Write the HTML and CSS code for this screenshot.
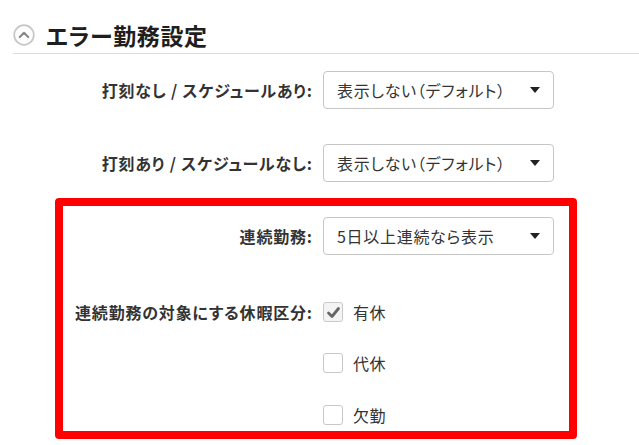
FILE: index.html
```html
<!DOCTYPE html>
<html lang="ja">
<head>
<meta charset="utf-8">
<title>エラー勤務設定</title>
<link rel="stylesheet" href="styles.css">
</head>
<body>
<div class="page">
  <div class="header">
    <span class="toggle">
      <svg width="22" height="22" viewBox="0 0 22 22"><circle cx="11" cy="11" r="9.8" fill="#fff" stroke="#c8c8c8" stroke-width="1.8"/><path d="M6.8 13 L11 8.8 L15.2 13" fill="none" stroke="#8a8a8a" stroke-width="2.2" stroke-linecap="round" stroke-linejoin="round"/></svg>
    </span>
    <h1 class="title">エラー勤務設定</h1>
  </div>
  <div class="form">
    <div class="row r1">
      <div class="label">打刻なし / スケジュールあり:</div>
      <div class="select"><span class="value">表示しない（デフォルト）</span><svg class="caret" width="10" height="6" viewBox="0 0 10 6"><path d="M0 0 H10 L5 6 Z" fill="#222"/></svg></div>
    </div>
    <div class="row r2">
      <div class="label">打刻あり / スケジュールなし:</div>
      <div class="select"><span class="value">表示しない（デフォルト）</span><svg class="caret" width="10" height="6" viewBox="0 0 10 6"><path d="M0 0 H10 L5 6 Z" fill="#222"/></svg></div>
    </div>
    <div class="row r3">
      <div class="label">連続勤務:</div>
      <div class="select"><span class="value">5日以上連続なら表示</span><svg class="caret" width="10" height="6" viewBox="0 0 10 6"><path d="M0 0 H10 L5 6 Z" fill="#222"/></svg></div>
    </div>
    <div class="row r4">
      <div class="label">連続勤務の対象にする休暇区分:</div>
      <label class="check"><span class="box checked"><svg width="15" height="13" viewBox="0 0 15 13"><path d="M2.5 7 L6 10.5 L12.5 2.5" fill="none" stroke="#666" stroke-width="2.8" stroke-linecap="round" stroke-linejoin="round"/></svg></span><span class="ctext">有休</span></label>
    </div>
    <div class="row r5">
      <div class="label"></div>
      <label class="check"><span class="box"></span><span class="ctext">代休</span></label>
    </div>
    <div class="row r6">
      <div class="label"></div>
      <label class="check"><span class="box"></span><span class="ctext">欠勤</span></label>
    </div>
  </div>
  <div class="highlight"></div>
</div>
</body>
</html>
```

FILE: styles.css
```css
* { box-sizing: border-box; }

html, body {
  margin: 0;
  padding: 0;
  background: #fff;
}

body {
  font-family: "Noto Sans CJK JP", "Noto Sans", sans-serif;
  font-feature-settings: "palt";
  color: #333;
  width: 639px;
  height: 445px;
  overflow: hidden;
}

.page {
  position: relative;
  width: 639px;
  height: 445px;
}

.header {
  display: flex;
  align-items: center;
  margin-left: 13px;
  height: 54px;
  padding-top: 17px;
  border-bottom: 1px solid #dcdcdc;
}

.toggle {
  display: flex;
  width: 22px;
  height: 22px;
  margin-right: 11px;
}

.title {
  margin: 0;
  font-size: 23px;
  font-weight: 700;
  color: #1e1e1e;
  line-height: 1;
  letter-spacing: 0.6px;
}

.form {
  display: flex;
  flex-direction: column;
}

.row {
  display: grid;
  grid-template-columns: 312px 231px;
  column-gap: 11px;
  align-items: center;
  height: 38px;
}

.r1 { margin-top: 17px; }
.r2 { margin-top: 35px; }
.r3 { margin-top: 35px; }
.r4 { margin-top: 38px; }
.r5 { margin-top: 13px; }
.r6 { margin-top: 14px; }

.label {
  text-align: right;
  font-size: 16px;
  font-weight: 700;
  color: #333;
  white-space: nowrap;
  letter-spacing: 0.8px;
  margin-right: -0.8px;
}

.select {
  display: flex;
  align-items: center;
  justify-content: space-between;
  height: 38px;
  border: 1px solid #c6c6c6;
  border-radius: 4px;
  padding: 0 13px 0 13px;
  background: #fff;
}

.value {
  font-size: 16px;
  color: #333;
  white-space: nowrap;
  letter-spacing: 0.7px;
}

.caret {
  display: block;
}

.check {
  display: flex;
  align-items: center;
}

.box {
  display: flex;
  align-items: center;
  justify-content: center;
  width: 20px;
  height: 20px;
  border: 1px solid #c8c8c8;
  border-radius: 3px;
  background: #fff;
  margin-right: 10px;
}

.box.checked {
  background: #f4f4f4;
}

.ctext {
  font-size: 16px;
  color: #333;
  letter-spacing: 0.5px;
}

.highlight {
  position: absolute;
  left: 55px;
  top: 198px;
  width: 522px;
  height: 241px;
  border: 8px solid #ff0000;
  border-radius: 4px;
  pointer-events: none;
}
```
